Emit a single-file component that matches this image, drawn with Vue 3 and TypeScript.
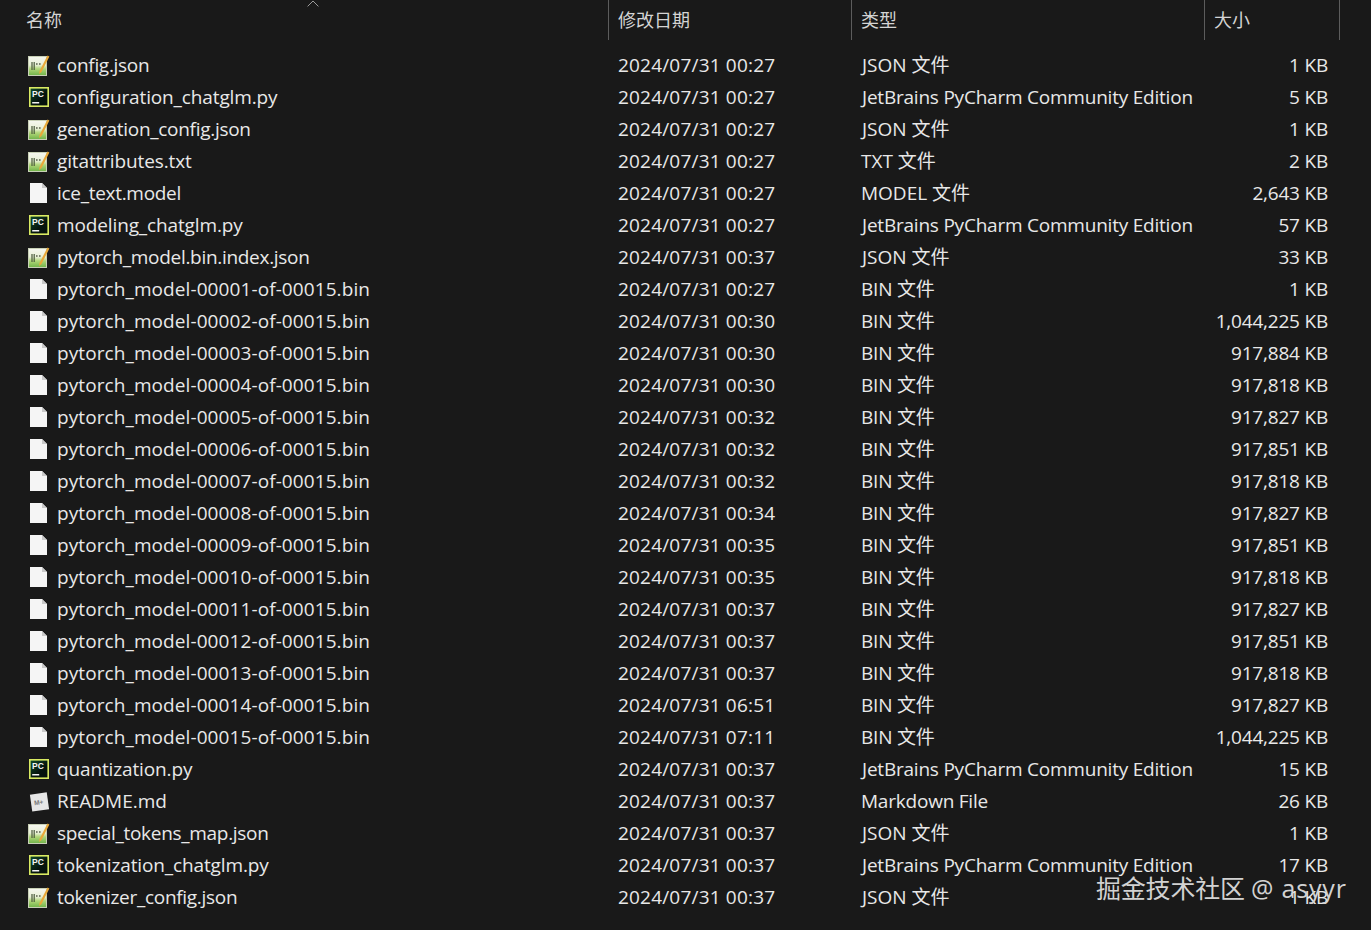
<script setup lang="ts">
type Kind = 'json' | 'pc' | 'blank' | 'md'
interface Row { name: string; date: string; type: string; size: string; kind: Kind }
const J = 'JSON 文件'
const P = 'JetBrains PyCharm Community Edition'
const B = 'BIN 文件'
const binTimes: [string, string][] = [
  ['00:27', '1 KB'], ['00:30', '1,044,225 KB'], ['00:30', '917,884 KB'], ['00:30', '917,818 KB'],
  ['00:32', '917,827 KB'], ['00:32', '917,851 KB'], ['00:32', '917,818 KB'], ['00:34', '917,827 KB'],
  ['00:35', '917,851 KB'], ['00:35', '917,818 KB'], ['00:37', '917,827 KB'], ['00:37', '917,851 KB'],
  ['00:37', '917,818 KB'], ['06:51', '917,827 KB'], ['07:11', '1,044,225 KB'],
]
const d = (t: string) => `2024/07/31 ${t}`
const rows: Row[] = [
  { name: 'config.json', date: d('00:27'), type: J, size: '1 KB', kind: 'json' },
  { name: 'configuration_chatglm.py', date: d('00:27'), type: P, size: '5 KB', kind: 'pc' },
  { name: 'generation_config.json', date: d('00:27'), type: J, size: '1 KB', kind: 'json' },
  { name: 'gitattributes.txt', date: d('00:27'), type: 'TXT 文件', size: '2 KB', kind: 'json' },
  { name: 'ice_text.model', date: d('00:27'), type: 'MODEL 文件', size: '2,643 KB', kind: 'blank' },
  { name: 'modeling_chatglm.py', date: d('00:27'), type: P, size: '57 KB', kind: 'pc' },
  { name: 'pytorch_model.bin.index.json', date: d('00:37'), type: J, size: '33 KB', kind: 'json' },
  ...binTimes.map(([t, s], i): Row => ({
    name: `pytorch_model-${String(i + 1).padStart(5, '0')}-of-00015.bin`,
    date: d(t), type: B, size: s, kind: 'blank',
  })),
  { name: 'quantization.py', date: d('00:37'), type: P, size: '15 KB', kind: 'pc' },
  { name: 'README.md', date: d('00:37'), type: 'Markdown File', size: '26 KB', kind: 'md' },
  { name: 'special_tokens_map.json', date: d('00:37'), type: J, size: '1 KB', kind: 'json' },
  { name: 'tokenization_chatglm.py', date: d('00:37'), type: P, size: '17 KB', kind: 'pc' },
  { name: 'tokenizer_config.json', date: d('00:37'), type: J, size: '1 KB', kind: 'json' },
]
const nameClass = (n: string): string => {
  if (n.endsWith('.bin')) return 'wide'
  if (n.endsWith('.py') || n.endsWith('.txt')) return 'mid'
  if (n.endsWith('.md')) return ''
  return 'tight'
}
const typeClass = (t: string): string[] => [
  t === P || t === B || t === 'Markdown File' ? 'type-tight' : '',
  t === P || t === J ? 'j-start' : '',
]
</script>

<template>
  <div class="explorer">
    <div class="header row-grid">
      <div class="hcell first">名称</div>
      <div class="hcell">修改日期</div>
      <div class="hcell">类型</div>
      <div class="hcell last">大小</div>
      <svg class="sort" width="12" height="7" viewBox="0 0 12 7"><path d="M.6 6.4 6 1l5.4 5.4" fill="none" stroke="#9a9a9a" stroke-width="1"/></svg>
    </div>
    <div class="list">
      <div v-for="r in rows" :key="r.name" class="row row-grid">
        <div class="name">
          <span class="icon">
            <svg v-if="r.kind === 'json'" width="24" height="24" viewBox="0 0 24 24">
              <defs>
                <linearGradient :id="'g' + r.name.length + r.name[0]" x1="0" y1="0" x2="0" y2="1">
                  <stop offset="0" stop-color="#f6f7f0"/><stop offset="0.45" stop-color="#e8f0d6"/><stop offset="0.65" stop-color="#b0d678"/><stop offset="1" stop-color="#6fb248"/>
                </linearGradient>
              </defs>
              <rect x="2.5" y="3.5" width="18" height="19" :fill="`url(#g${r.name.length}${r.name[0]})`" stroke="#c8d0b6" stroke-width="1"/>
              <path d="M6 9v8M8.2 9v8" stroke="#4a5a3c" stroke-width="1.2"/>
              <path d="M10 11h1.6M13 11h1.6" stroke="#59604c" stroke-width="1.3"/>
              <path d="M13.5 18 21.5 2.5l1.9 1L15.5 19l-2.4 2z" fill="#e9a93a"/>
            </svg>
            <svg v-else-if="r.kind === 'pc'" width="24" height="24" viewBox="0 0 24 24">
              <defs>
                <linearGradient id="pcfill" x1="0" y1="0" x2="1" y2="1">
                  <stop offset="0" stop-color="#0f4a2c"/><stop offset="0.6" stop-color="#06140e"/><stop offset="1" stop-color="#05100c"/>
                </linearGradient>
              </defs>
              <rect x="3" y="2" width="20" height="20" fill="#d9ea62"/>
              <rect x="4.6" y="3.6" width="16.8" height="16.8" fill="url(#pcfill)"/>
              <text x="6" y="12" class="pc">PC</text>
              <rect x="6.2" y="17" width="7" height="1.5" fill="#f2f2f2"/>
            </svg>
            <svg v-else-if="r.kind === 'blank'" width="24" height="24" viewBox="0 0 24 24">
              <path d="M4 2h12l5 5v15H4z" fill="#f5f5f5"/>
              <path d="M16 2v5h5z" fill="#c9c9c9"/>
            </svg>
            <svg v-else width="24" height="24" viewBox="0 0 24 24">
              <g transform="rotate(-8 13 13)">
                <rect x="5" y="4.5" width="17" height="17" fill="#e6e6e6"/>
                <text x="8" y="15.5" class="md">M+</text>
              </g>
            </svg>
          </span>
          <span :class="nameClass(r.name)">{{ r.name }}</span>
        </div>
        <div class="cell date">{{ r.date }}</div>
        <div class="cell type" :class="typeClass(r.type)">{{ r.type }}</div>
        <div class="cell size">{{ r.size }}</div>
      </div>
    </div>
    <div class="watermark">掘金技术社区 <span class="handle">@ asyyr</span></div>
  </div>
</template>

<style>
html, body { margin: 0; background: #191919; }
</style>

<style scoped>
.explorer {
  position: relative;
  width: 1371px;
  height: 930px;
  overflow: hidden;
  background: #191919;
  color: #e8e8e8;
  font-family: "Open Sans", "Noto Sans CJK SC", sans-serif;
  font-size: 19px;
}
.row-grid {
  display: grid;
  grid-template-columns: 608px 243px 353px 136px;
}
.header {
  position: relative;
  height: 40px;
  margin-bottom: 9px;
  color: #d4d4d4;
  font-size: 18px;
}
.hcell {
  border-left: 1px solid #5c5c5c;
  padding: 0 0 0 9px;
  line-height: 40px;
}
.hcell.first { border-left: none; padding-left: 26px; }
.hcell.last { border-right: 1px solid #5c5c5c; }
.sort { position: absolute; left: 307px; top: 0; }
.row { height: 32px; line-height: 32px; }
.name { display: flex; align-items: center; padding-left: 26px; white-space: nowrap; }
.icon { width: 31px; height: 24px; display: flex; flex: none; }
.tight { letter-spacing: -0.3px; }
.mid { letter-spacing: -0.13px; }
.wide { letter-spacing: 0.09px; }
.cell { padding-left: 10px; white-space: nowrap; }
.date { letter-spacing: 0.19px; }
.type-tight { letter-spacing: -0.22px; }
.j-start { padding-left: 11px; }
.size { padding: 0 12px 0 0; text-align: right; letter-spacing: -0.2px; }
.pc { font: bold 8.5px "Liberation Sans", sans-serif; fill: #f4f4f4; }
.md { font: bold 6.5px "Liberation Sans", sans-serif; fill: #777; }
.watermark {
  position: absolute;
  left: 1096px;
  top: 871px;
  font-size: 25px;
  line-height: 34px;
  letter-spacing: -0.2px;
  color: #d2d2d2;
  white-space: nowrap;
}
.handle { letter-spacing: 0.8px; }
</style>
